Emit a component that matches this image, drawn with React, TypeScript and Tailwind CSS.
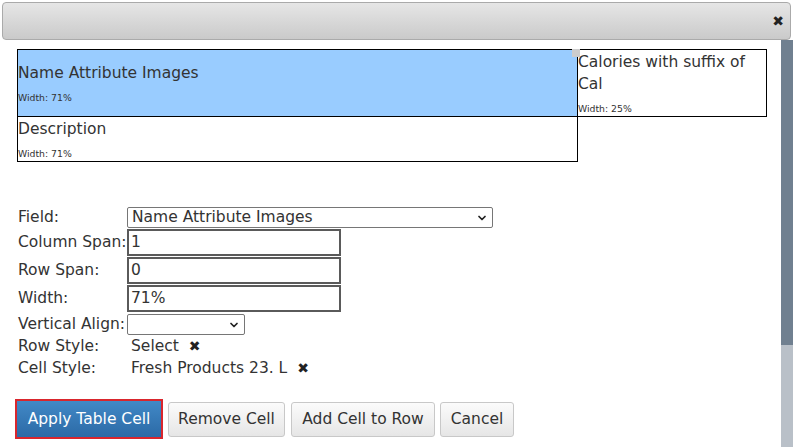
import { ChevronDown } from 'lucide-react';

function Chevron() {
  return <ChevronDown size={12} strokeWidth={3.5} className="text-[#222]" />;
}

function Cell({ title, width, className }: { title: string; width: string; className: string }) {
  return (
    <div className={`flex flex-col justify-center border border-black ${className}`}>
      <div className="leading-[22px]">{title}</div>
      <div className="mt-2 text-[9.3px] leading-[12px]">Width: {width}</div>
    </div>
  );
}

function Row({ label, children, className }: { label: string; children: React.ReactNode; className: string }) {
  return (
    <div className={`flex items-center ${className}`}>
      <div className="w-[109px] shrink-0 whitespace-nowrap">{label}</div>
      {children}
    </div>
  );
}

function TextBox({ value }: { value: string }) {
  return (
    <div className="flex h-[27px] w-[214px] items-center border-2 border-[#5a5a5a] bg-white pl-[2px]">
      {value}
    </div>
  );
}

export default function App() {
  return (
    <div className="relative flex h-[447px] w-[793px] flex-col overflow-hidden bg-white font-['DejaVu_Sans',sans-serif] text-[15.5px] text-[#333]">
      {/* barra de título */}
      <div className="mx-[2px] mt-[2px] flex h-[38px] shrink-0 items-center justify-end rounded-[4px] border border-[#aaa] bg-gradient-to-b from-[#e6e6e6] to-[#cacaca] pr-[6px]">
        <span className="text-[14px] leading-none text-[#222]">✖</span>
      </div>

      <div className="flex min-h-0 flex-1">
        <div className="flex-1 pl-[17px] pt-[9px]">
          {/* tabla */}
          <div className="relative">
            <div className="flex">
              <Cell title="Name Attribute Images" width="71%" className="h-[68px] w-[561px] bg-[#99ccff]" />
              <Cell title="Calories with suffix of Cal" width="25%" className="-ml-px h-[68px] w-[190px]" />
            </div>
            <Cell title="Description" width="71%" className="-mt-px h-[46px] w-[561px]" />
            <div className="absolute left-[555px] top-0 h-[8px] w-[8px] bg-[#cccccc]" />
          </div>

          {/* formulario */}
          <div className="mt-[45px] pl-px">
            <Row label="Field:" className="h-[21px]">
              <div className="flex h-[21px] w-[366px] items-center justify-between rounded-[2px] border border-[#767676] bg-white pl-[4px] pr-[4px]">
                <span>Name Attribute Images</span>
                <Chevron />
              </div>
            </Row>
            <Row label="Column Span:" className="mt-[1px]">
              <TextBox value="1" />
            </Row>
            <Row label="Row Span:" className="mt-[1px]">
              <TextBox value="0" />
            </Row>
            <Row label="Width:" className="mt-[1px]">
              <TextBox value="71%" />
            </Row>
            <Row label="Vertical Align:" className="mt-[1px]">
              <div className="flex h-[21px] w-[118px] items-center justify-end rounded-[2px] border border-[#767676] bg-white pr-[4px]">
                <Chevron />
              </div>
            </Row>
            <Row label="Row Style:" className="h-[21px]">
              <span className="pl-[4px]">Select</span>
              <span className="ml-[10px] text-[14px] text-[#222]">✖</span>
            </Row>
            <Row label="Cell Style:" className="h-[22px]">
              <span className="pl-[4px]">Fresh Products 23. L</span>
              <span className="ml-[10px] text-[14px] text-[#222]">✖</span>
            </Row>
          </div>

          {/* botones */}
          <div className="mt-[20px] -ml-[2px] flex items-center">
            <div className="border-2 border-[#d9262d]">
              <button className="h-[36px] w-[144px] bg-gradient-to-b from-[#4189c7] to-[#2c6aa6] text-white">
                Apply Table Cell
              </button>
            </div>
            <button className="ml-[5px] h-[35px] w-[117px] rounded-[3px] border border-[#c8c8c8] bg-gradient-to-b from-[#fbfbfb] to-[#e6e6e6] text-[#333]">
              Remove Cell
            </button>
            <button className="ml-[6px] h-[35px] w-[144px] rounded-[3px] border border-[#c8c8c8] bg-gradient-to-b from-[#fbfbfb] to-[#e6e6e6] text-[#333]">
              Add Cell to Row
            </button>
            <button className="ml-[5px] h-[35px] w-[74px] rounded-[3px] border border-[#c8c8c8] bg-gradient-to-b from-[#fbfbfb] to-[#e6e6e6] text-[#333]">
              Cancel
            </button>
          </div>
        </div>

        {/* barra de desplazamiento */}
        <div className="flex w-[12px] shrink-0 flex-col">
          <div className="h-[305px] bg-[#708090]" />
          <div className="flex-1 bg-[#b9c0c8]" />
        </div>
      </div>
    </div>
  );
}
